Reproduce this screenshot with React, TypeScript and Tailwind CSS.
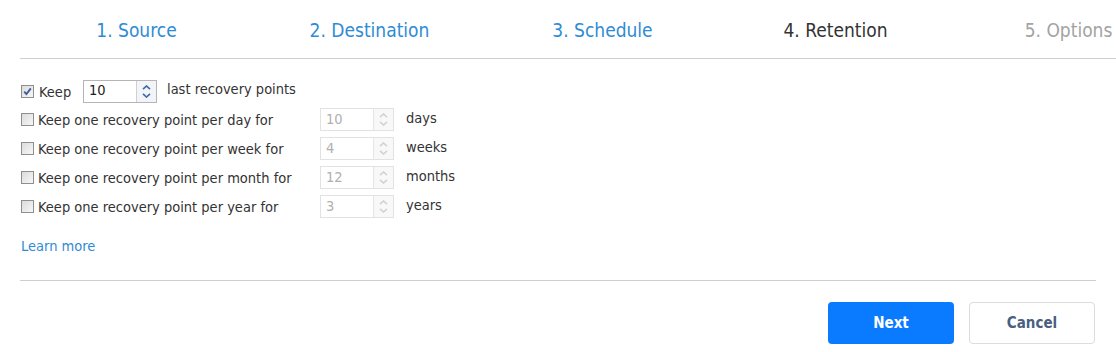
import React from "react";

const tabs = [
  { label: "1. Source", tone: "text-[#2f8bd5]" },
  { label: "2. Destination", tone: "text-[#2f8bd5]" },
  { label: "3. Schedule", tone: "text-[#2f8bd5]" },
  { label: "4. Retention", tone: "text-[#333333]" },
  { label: "5. Options", tone: "text-[#a3a3a3]" },
];

const rows = [
  { label: "Keep one recovery point per day for", value: "10", unit: "days" },
  { label: "Keep one recovery point per week for", value: "4", unit: "weeks" },
  { label: "Keep one recovery point per month for", value: "12", unit: "months" },
  { label: "Keep one recovery point per year for", value: "3", unit: "years" },
];

const Checkbox = ({ checked }: { checked?: boolean }) => (
  <span className="flex h-[13px] w-[13px] shrink-0 items-center justify-center border border-[#8f8f8f] bg-gradient-to-br from-[#dcdcdc] to-[#f7f7f7]">
    {checked && (
      <svg width="9" height="9" viewBox="0 0 9 9">
        <path d="M1.2 4.6 L3.4 7 L7.8 1.4" fill="none" stroke="#3b5c9a" strokeWidth="1.8" />
      </svg>
    )}
  </span>
);

const Spinner = ({ value, disabled }: { value: string; disabled?: boolean }) => {
  const arrow = disabled ? "#d2d2d2" : "#3d68a8";
  return (
    <div
      className={`flex h-[23px] w-[74px] shrink-0 border ${
        disabled ? "border-[#e2e2e2] text-[#b0b0b0]" : "border-[#b5b5b5] text-[#222]"
      }`}
    >
      <span className="flex flex-1 items-center pl-[5px] text-[14.5px]">{value}</span>
      <span
        className={`flex w-[20px] flex-col items-center justify-center gap-[3px] border-l ${
          disabled ? "border-[#e6e6e6] bg-[#f8f8f8]" : "border-[#d0d0d0] bg-[#f2f4f7]"
        }`}
      >
        <svg width="9" height="5" viewBox="0 0 9 5">
          <path d="M1 4.2 L4.5 1 L8 4.2" fill="none" stroke={arrow} strokeWidth="1.6" />
        </svg>
        <svg width="9" height="5" viewBox="0 0 9 5">
          <path d="M1 0.8 L4.5 4 L8 0.8" fill="none" stroke={arrow} strokeWidth="1.6" />
        </svg>
      </span>
    </div>
  );
};

export default function App() {
  return (
    <div className="h-[352px] w-[1116px] overflow-hidden bg-white font-['DejaVu_Sans_Condensed','DejaVu_Sans',sans-serif] text-[#333]">
      {/* Step tabs */}
      <div className="ml-[20px] flex h-[59px] w-[1165px] items-center border-b border-[#cfcfcf] pt-[3px]">
        {tabs.map((t) => (
          <div key={t.label} className={`w-[233px] shrink-0 text-center text-[19px] ${t.tone}`}>
            {t.label}
          </div>
        ))}
      </div>

      {/* Retention rules */}
      <div className="flex flex-col px-[21px] pt-[21px] text-[14.5px]">
        <div className="flex h-[22px] items-center">
          <Checkbox checked />
          <span className="ml-[5px] mt-[4px] w-[44px]">Keep</span>
          <Spinner value="10" />
          <span className="ml-[10px] mt-[-2px]">last recovery points</span>
        </div>
        {rows.map((r) => (
          <div key={r.unit} className="mt-[6px] flex h-[23px] items-center">
            <Checkbox />
            <span className="ml-[4px] mt-[3px] w-[282px]">{r.label}</span>
            <Spinner value={r.value} disabled />
            <span className="ml-[12px] mt-[-1px]">{r.unit}</span>
          </div>
        ))}
        <a className="mt-[18px] text-[14.5px] text-[#2f8bd5]">Learn more</a>
      </div>

      {/* Footer */}
      <div className="mx-[20px] mt-[22px] border-t border-[#cfcfcf]" />
      <div className="flex justify-end gap-[15px] pr-[21px] pt-[21px]">
        <button className="h-[42px] w-[126px] rounded-[4px] bg-[#0a7aff] text-[15px] font-bold text-white">
          Next
        </button>
        <button className="h-[42px] w-[126px] rounded-[4px] border border-[#dcdcdc] bg-white text-[15px] font-bold text-[#4a5f80]">
          Cancel
        </button>
      </div>
    </div>
  );
}
